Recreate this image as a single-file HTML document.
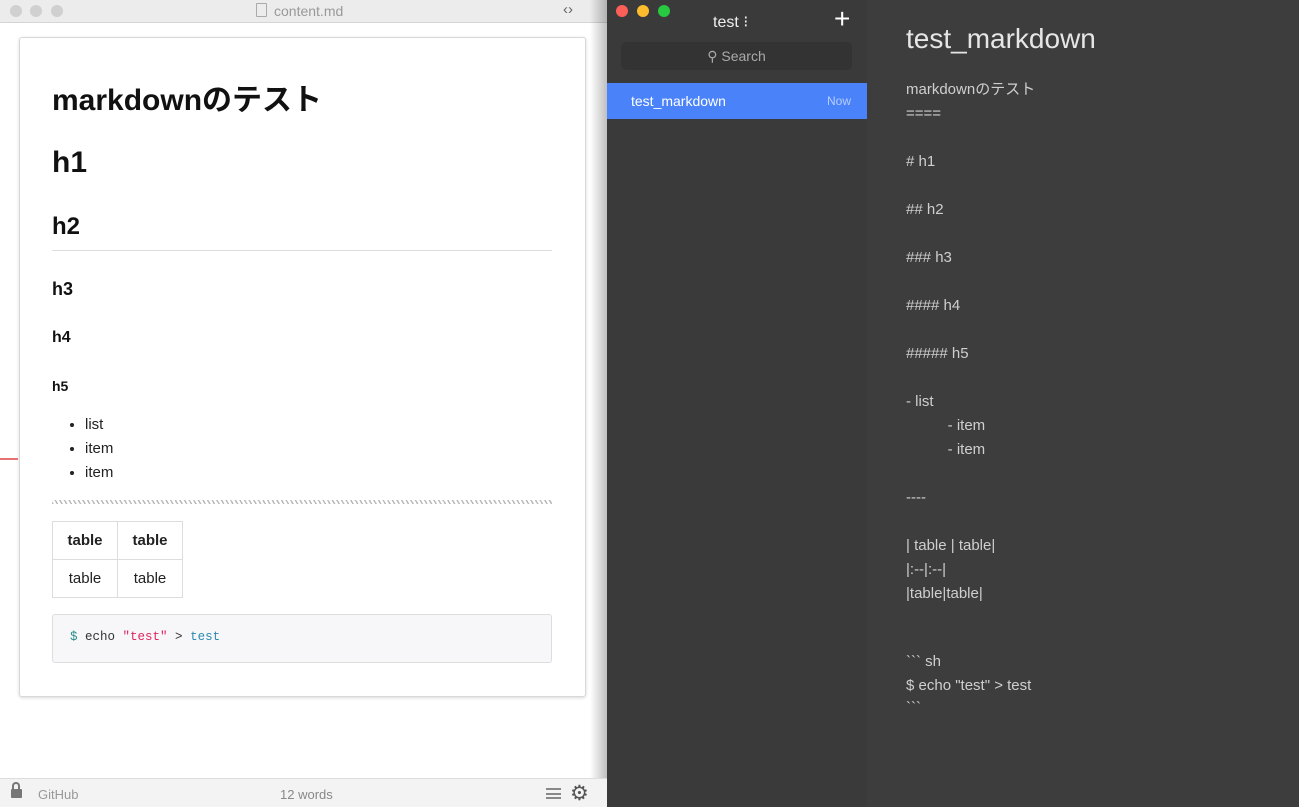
<!DOCTYPE html>
<html><head><meta charset="utf-8"><style>
*{margin:0;padding:0;box-sizing:border-box}
body{width:1299px;height:807px;overflow:hidden;position:relative;font-family:"Liberation Sans","Noto Sans CJK JP",sans-serif;background:#3d3d3d}
.left{position:absolute;left:0;top:0;width:607px;height:807px;background:#fff}
.tb{position:absolute;left:0;top:0;width:607px;height:23px;background:#ececec;border-bottom:1px solid #d5d5d5}
.dot{position:absolute;top:5px;width:12px;height:12px;border-radius:50%;background:#d0d0d0}
.card{position:absolute;left:19px;top:37px;width:567px;height:660px;border:1px solid #d8d8d8;border-radius:3px;box-shadow:0 1px 3px rgba(0,0,0,.15);background:#fff}
.c{position:absolute;left:52px;color:#111;font-weight:bold}
.shadow{position:absolute;left:590px;top:0;width:17px;height:807px;background:linear-gradient(to right,rgba(0,0,0,0),rgba(0,0,0,.25))}
.bb{position:absolute;left:0;top:778px;width:607px;height:29px;background:#f3f3f3;border-top:1px solid #ddd;color:#999;font-size:13px}
.side{position:absolute;left:607px;top:0;width:260px;height:807px;background:#3a3a3a}
.ed{position:absolute;left:906px;color:#cfcfcf;font-size:15px;line-height:24px;white-space:pre}
table{border-collapse:collapse;position:absolute;left:52px;top:521px}
td{border:1px solid #ddd;width:65px;height:38px;text-align:center;font-size:15px;color:#222}
</style></head><body>
<div class="left">
<div class="tb">
<div class="dot" style="left:10px"></div><div class="dot" style="left:30px"></div><div class="dot" style="left:51px"></div>
<div style="position:absolute;left:256px;top:3px;width:11px;height:14px;border:1px solid #aaa;border-radius:1px"></div>
<div style="position:absolute;left:274px;top:3px;font-size:14px;color:#999">content.md</div>
<div style="position:absolute;left:563px;top:1px;font-size:15px;color:#666">&lsaquo;&rsaquo;</div>
</div>
<div class="card"></div>
<div class="c" style="top:75px;font-size:30px">markdownのテスト</div>
<div class="c" style="top:146px;font-size:30px">h1</div>
<div class="c" style="top:213px;font-size:24px">h2</div>
<div style="position:absolute;left:52px;top:250px;width:500px;height:1px;background:#ddd"></div>
<div class="c" style="top:279px;font-size:18px">h3</div>
<div class="c" style="top:329px;font-size:16px">h4</div>
<div class="c" style="top:378px;font-size:14px">h5</div>
<ul style="position:absolute;left:85px;top:413px;font-size:15px;color:#222;line-height:24px">
<li>list</li><li>item</li><li>item</li></ul>
<div style="position:absolute;left:52px;top:500px;width:500px;height:4px;background:repeating-linear-gradient(60deg,#bbb 0 1.5px,#fff 1.5px 4px)"></div>
<table><tr><td style="font-weight:bold">table</td><td style="font-weight:bold">table</td></tr><tr><td>table</td><td>table</td></tr></table>
<div style="position:absolute;left:52px;top:614px;width:500px;height:49px;background:#f7f7fa;border:1px solid #ddd;border-radius:3px;font-family:'Liberation Mono',monospace;font-size:12.5px;padding:15px 17px;color:#333"><span style="color:#2a8a8a">$</span> echo <span style="color:#e0245e">"test"</span> &gt; <span style="color:#2a8ab0">test</span></div>
<div style="position:absolute;left:0;top:458px;width:18px;height:2px;background:#e57373"></div>
<div class="shadow"></div>
<div class="bb">
<div style="position:absolute;left:11px;top:10px;width:11px;height:9px;background:#777;border-radius:1px"></div>
<div style="position:absolute;left:12px;top:3px;width:8px;height:9px;border:2px solid #777;border-bottom:none;border-radius:4px 4px 0 0"></div>
<div style="position:absolute;left:38px;top:8px">GitHub</div>
<div style="position:absolute;left:280px;top:8px;color:#888">12 words</div>
<div style="position:absolute;left:546px;top:9px;width:15px;height:11px;border-top:2px solid #888;border-bottom:2px solid #888"><div style="margin-top:2.5px;height:2px;background:#888"></div></div>
<div style="position:absolute;left:570px;top:2px;font-size:21px;color:#555">⚙</div>
</div>
</div>
<div class="side">
<div class="dot" style="left:9px;top:5px;background:#fc5f57"></div>
<div class="dot" style="left:30px;top:5px;background:#fdbc2e"></div>
<div class="dot" style="left:51px;top:5px;background:#28c840"></div>
<div style="position:absolute;left:106px;top:12px;color:#eee;font-size:16px">test ⁝</div>
<div style="position:absolute;left:227px;top:3px;color:#fff;font-size:28px;font-weight:300">+</div>
<div style="position:absolute;left:14px;top:42px;width:231px;height:28px;background:#333;border-radius:5px;color:#aaa;font-size:14px;text-align:center;line-height:28px">⚲ Search</div>
<div style="position:absolute;left:0;top:83px;width:260px;height:36px;background:#4a82fa;color:#fff;font-size:14px;line-height:36px;padding-left:24px">test_markdown<span style="position:absolute;right:16px;font-size:12px;color:#b8cdfc">Now</span></div>
</div>
<div class="ed" style="top:21px;font-size:28px;color:#e6e6e6;line-height:36px">test_markdown</div>
<div class="ed" style="top:78px">markdownのテスト
====

# h1

## h2

### h3

#### h4

##### h5

- list
          - item
          - item

----

| table | table|
|:--|:--|
|table|table|</div>
<div class="ed" style="top:650px">&#96;&#96;&#96; sh</div>
<div class="ed" style="top:674px">$ echo "test" &gt; test</div>
<div class="ed" style="top:696px">&#96;&#96;&#96;</div>
</body></html>
